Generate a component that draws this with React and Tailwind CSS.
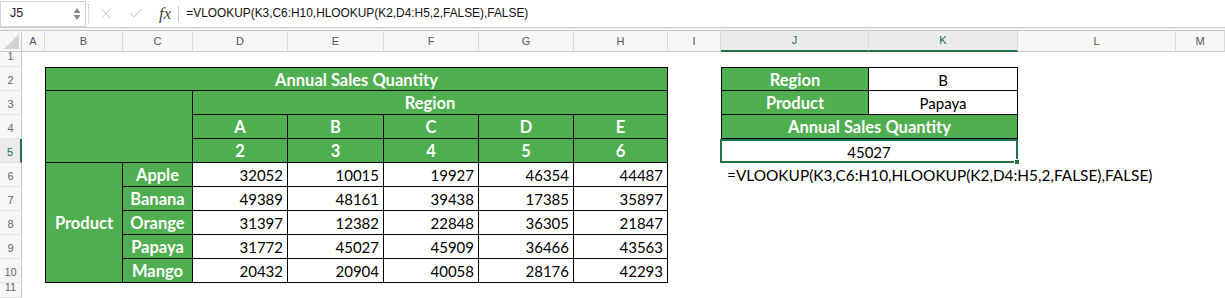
import { X, Check } from "lucide-react";

const COL_HEADERS = [
  { label: "A", cls: "col-start-2" },
  { label: "B", cls: "col-start-3" },
  { label: "C", cls: "col-start-4" },
  { label: "D", cls: "col-start-5" },
  { label: "E", cls: "col-start-6" },
  { label: "F", cls: "col-start-7" },
  { label: "G", cls: "col-start-8" },
  { label: "H", cls: "col-start-9" },
  { label: "I", cls: "col-start-10" },
  { label: "J", cls: "col-start-11", active: true },
  { label: "K", cls: "col-start-12", active: true },
  { label: "L", cls: "col-start-13" },
  { label: "M", cls: "col-start-14" },
];

const ROW_CLASSES = [
  "row-start-2",
  "row-start-3",
  "row-start-4",
  "row-start-5",
  "row-start-6",
  "row-start-7",
  "row-start-8",
  "row-start-9",
  "row-start-10",
  "row-start-11",
  "row-start-12",
];

const DATA_COLS = ["col-start-5", "col-start-6", "col-start-7", "col-start-8", "col-start-9"];
const DATA_ROWS = ["row-start-7", "row-start-8", "row-start-9", "row-start-10", "row-start-11"];

const REGIONS = ["A", "B", "C", "D", "E"];
const CODES = ["2", "3", "4", "5", "6"];

const SALES = [
  { product: "Apple", values: [32052, 10015, 19927, 46354, 44487] },
  { product: "Banana", values: [49389, 48161, 39438, 17385, 35897] },
  { product: "Orange", values: [31397, 12382, 22848, 36305, 21847] },
  { product: "Papaya", values: [31772, 45027, 45909, 36466, 43563] },
  { product: "Mango", values: [20432, 20904, 40058, 28176, 42293] },
];

const FORMULA = "=VLOOKUP(K3,C6:H10,HLOOKUP(K2,D4:H5,2,FALSE),FALSE)";

const green =
  "flex items-center justify-center pt-[2px] bg-[#4eae50] text-[16.5px] font-bold text-white border-r border-b border-black";
const white = "flex items-center pt-[2px] bg-white text-black border-r border-b border-black";

const FormulaBar = () => (
  <div className="flex h-[28px] items-center border-b border-[#c9c9c9] bg-white font-['Liberation_Sans',sans-serif]">
    <div className="flex h-[26px] w-[86px] items-center justify-between border border-[#d2d2d2] bg-white pl-[9px] pr-[4px] text-[12.5px] text-[#222]">
      <span>J5</span>
      <svg width="8" height="16" viewBox="0 0 8 16">
        <path d="M4 2 L7.5 7 L0.5 7 Z" fill="#8a8a8a" />
        <path d="M4 14 L7.5 9 L0.5 9 Z" fill="#8a8a8a" />
      </svg>
    </div>
    <div className="ml-[2px] h-[20px] border-l border-dotted border-[#c4c4c4]" />
    <div className="ml-[9px] flex w-[16px] justify-center">
      <X size={17} strokeWidth={1.3} color="#b4b4b4" />
    </div>
    <div className="ml-[14px] flex w-[16px] justify-center">
      <Check size={17} strokeWidth={1.3} color="#b4b4b4" />
    </div>
    <span className="ml-[15px] font-['Liberation_Serif',serif] text-[17px] italic leading-none text-[#444]">fx</span>
    <div className="ml-[7px] h-[16px] border-l border-[#cfcfcf]" />
    <span className="ml-[7px] text-[11.9px] text-[#111]">{FORMULA}</span>
  </div>
);

export default function App() {
  return (
    <div className="h-[298px] w-[1225px] overflow-hidden bg-white">
      <FormulaBar />
      <div className="h-[3px] border-b border-[#c9c9c9] bg-[#f3f3f3]" />

      <div className="grid grid-cols-[22px_23px_78px_70px_95px_96px_95px_95px_94px_53px_148px_149px_158px_1fr] grid-rows-[21px_15px_24px_24px_24px_24px_24px_24px_24px_24px_24px_15px] font-['Lato',sans-serif] text-[15px]">
        {/* corner */}
        <div className="col-start-1 row-start-1 flex items-end justify-end border-r border-b border-[#c9c9c9] bg-[#f7f7f7] pb-[2px] pr-[2px]">
          <svg width="15" height="15" viewBox="0 0 15 15">
            <path d="M15 0 L15 15 L0 15 Z" fill="#d2d2d2" />
          </svg>
        </div>

        {COL_HEADERS.map((c) => (
          <div
            key={c.label}
            className={`${c.cls} row-start-1 flex items-center justify-center border-r font-['Liberation_Sans',sans-serif] text-[11px] ${
              c.active
                ? "border-b-2 border-r-[#dcdcdc] border-b-[#217346] bg-[#ebebeb] text-[#217346]"
                : "border-b border-r-[#dcdcdc] border-b-[#c9c9c9] bg-[#f7f7f7] text-[#555]"
            }`}
          >
            {c.label}
          </div>
        ))}

        {ROW_CLASSES.map((cls, i) => (
          <div
            key={cls}
            className={`${cls} col-start-1 flex items-end justify-center pb-[4px] font-['Liberation_Sans',sans-serif] text-[11px] leading-none ${
              i === 4
                ? "border-r-2 border-b border-r-[#217346] border-b-[#e0e0e0] bg-[#ebebeb] text-[#217346]"
                : "border-r border-b border-r-[#c9c9c9] border-b-[#e4e4e4] bg-[#f7f7f7] text-[#666]"
            }`}
          >
            {i + 1}
          </div>
        ))}

        {/* main table */}
        <div className={`${green} col-start-3 col-span-7 row-start-3 border-t border-l`}>Annual Sales Quantity</div>
        <div className={`${green} col-start-3 col-span-2 row-start-4 row-span-3 border-l`} />
        <div className={`${green} col-start-5 col-span-5 row-start-4`}>Region</div>
        {REGIONS.map((r, i) => (
          <div key={r} className={`${green} ${DATA_COLS[i]} row-start-5`}>
            {r}
          </div>
        ))}
        {CODES.map((n, i) => (
          <div key={n} className={`${green} ${DATA_COLS[i]} row-start-6`}>
            {n}
          </div>
        ))}
        <div className={`${green} col-start-3 row-start-7 row-span-5 border-l`}>Product</div>
        {SALES.map((row, r) => (
          <div key={row.product} className={`${green} col-start-4 ${DATA_ROWS[r]}`}>
            {row.product}
          </div>
        ))}
        {SALES.map((row, r) =>
          row.values.map((v, c) => (
            <div key={`${r}-${c}`} className={`${white} ${DATA_COLS[c]} ${DATA_ROWS[r]} justify-end pr-[4px]`}>
              {v}
            </div>
          ))
        )}

        {/* lookup table */}
        <div className={`${green} col-start-11 row-start-3 border-t border-l`}>Region</div>
        <div className={`${white} col-start-12 row-start-3 justify-center border-t`}>B</div>
        <div className={`${green} col-start-11 row-start-4 border-l`}>Product</div>
        <div className={`${white} col-start-12 row-start-4 justify-center`}>Papaya</div>
        <div className={`${green} col-start-11 col-span-2 row-start-5 border-l`}>Annual Sales Quantity</div>
        <div className="relative col-start-11 col-span-2 row-start-6 -ml-px flex items-center justify-center border-2 border-[#217346] bg-white pt-[2px] text-black">
          45027
          <div className="absolute -right-[4px] -bottom-[4px] h-[6px] w-[6px] border border-white bg-[#217346]" />
        </div>
        <div className="col-start-11 col-span-3 row-start-7 flex items-center whitespace-nowrap pl-[6px] pt-[2px] text-[15.4px] text-black">
          {FORMULA}
        </div>
      </div>
    </div>
  );
}
